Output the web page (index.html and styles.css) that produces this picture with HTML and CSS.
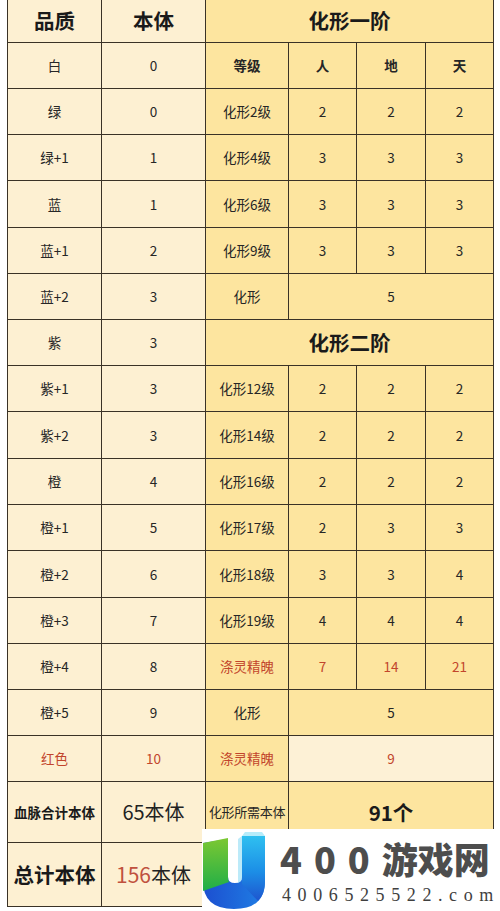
FILE: index.html
```html
<!DOCTYPE html>
<html lang="zh">
<head>
<meta charset="utf-8">
<link rel="stylesheet" href="styles.css">
</head>
<body>
<div class="page">
<table class="grid">
  <colgroup>
    <col class="w1"><col class="w2"><col class="w3"><col class="w4"><col class="w5"><col class="w6">
  </colgroup>
  <tr class="h-head">
    <th class="c big">品质</th><th class="c big">本体</th><th class="y big" colspan="4">化形一阶</th>
  </tr>
  <tr class="r">
    <td class="c">白</td><td class="c">0</td><td class="y b">等级</td><td class="y b">人</td><td class="y b">地</td><td class="y b">天</td>
  </tr>
  <tr class="r">
    <td class="c">绿</td><td class="c">0</td><td class="y">化形2级</td><td class="y">2</td><td class="y">2</td><td class="y">2</td>
  </tr>
  <tr class="r">
    <td class="c">绿+1</td><td class="c">1</td><td class="y">化形4级</td><td class="y">3</td><td class="y">3</td><td class="y">3</td>
  </tr>
  <tr class="r t">
    <td class="c">蓝</td><td class="c">1</td><td class="y">化形6级</td><td class="y">3</td><td class="y">3</td><td class="y">3</td>
  </tr>
  <tr class="r">
    <td class="c">蓝+1</td><td class="c">2</td><td class="y">化形9级</td><td class="y">3</td><td class="y">3</td><td class="y">3</td>
  </tr>
  <tr class="r">
    <td class="c">蓝+2</td><td class="c">3</td><td class="y">化形</td><td class="y" colspan="3">5</td>
  </tr>
  <tr class="r">
    <td class="c">紫</td><td class="c">3</td><td class="y big" colspan="4">化形二阶</td>
  </tr>
  <tr class="r">
    <td class="c">紫+1</td><td class="c">3</td><td class="y">化形12级</td><td class="y">2</td><td class="y">2</td><td class="y">2</td>
  </tr>
  <tr class="r t">
    <td class="c">紫+2</td><td class="c">3</td><td class="y">化形14级</td><td class="y">2</td><td class="y">2</td><td class="y">2</td>
  </tr>
  <tr class="r">
    <td class="c">橙</td><td class="c">4</td><td class="y">化形16级</td><td class="y">2</td><td class="y">2</td><td class="y">2</td>
  </tr>
  <tr class="r">
    <td class="c">橙+1</td><td class="c">5</td><td class="y">化形17级</td><td class="y">2</td><td class="y">3</td><td class="y">3</td>
  </tr>
  <tr class="r t">
    <td class="c">橙+2</td><td class="c">6</td><td class="y">化形18级</td><td class="y">3</td><td class="y">3</td><td class="y">4</td>
  </tr>
  <tr class="r">
    <td class="c">橙+3</td><td class="c">7</td><td class="y">化形19级</td><td class="y">4</td><td class="y">4</td><td class="y">4</td>
  </tr>
  <tr class="r">
    <td class="c">橙+4</td><td class="c">8</td><td class="y red">涤灵精魄</td><td class="y red">7</td><td class="y red">14</td><td class="y red">21</td>
  </tr>
  <tr class="r">
    <td class="c">橙+5</td><td class="c">9</td><td class="y">化形</td><td class="y" colspan="3">5</td>
  </tr>
  <tr class="r">
    <td class="c red">红色</td><td class="c red">10</td><td class="y red">涤灵精魄</td><td class="lt red" colspan="3">9</td>
  </tr>
  <tr class="h-sum">
    <td class="c b sumlabel">血脉合计本体</td><td class="c mid">65本体</td><td class="y need">化形所需本体</td><td class="y big" colspan="3">91个</td>
  </tr>
  <tr class="h-total">
    <td class="c big">总计本体</td><td class="c mid"><span class="redn">156</span>本体</td><td class="y" colspan="4"></td>
  </tr>
</table>

<div class="brand">
  <svg class="logo" viewBox="0 0 62 78" width="62" height="78" aria-hidden="true">
    <defs>
      <linearGradient id="gb" x1="0" y1="0" x2="0" y2="1">
        <stop offset="0" stop-color="#2fc0f0"/>
        <stop offset="0.55" stop-color="#1c8ee6"/>
        <stop offset="1" stop-color="#1e55cf"/>
      </linearGradient>
      <linearGradient id="gu" x1="0" y1="0" x2="1" y2="0">
        <stop offset="0" stop-color="#1c4fd0"/>
        <stop offset="1" stop-color="#1f7ee4"/>
      </linearGradient>
      <linearGradient id="gg" x1="0" y1="0" x2="0" y2="1">
        <stop offset="0" stop-color="#7cc832"/>
        <stop offset="1" stop-color="#1fae48"/>
      </linearGradient>
    </defs>
    <path d="M0 12 L0 50 Q0 78 31 78 Q62 78 62 50 L62 5 L39 5 L39 46 Q39 52 32 52 Q25 52 25 46 L25 8 Z" fill="url(#gu)"/>
    <path d="M39 5 L62 5 L62 50 Q62 63 55 70 L39 53 Z" fill="url(#gb)"/>
    <path d="M0 12 L25 7 L25 46 Q25 49 26 51 L0 60 Z" fill="url(#gg)"/>
    <path d="M39 5 L62 5 L59 1 L42 1 Z" fill="#b6ecfa"/>
    <path d="M39 5 L39 46 Q39 51 35 52 L35 8 Z" fill="#8fdcf5" opacity="0.6"/>
  </svg>
  <div class="brand-text">
    <div class="brand-name"><span class="digits">400</span>游戏网</div>
    <div class="brand-url">4006525522.com</div>
  </div>
</div>
</div>
</body>
</html>
```

FILE: styles.css
```css
html, body {
  margin: 0;
  padding: 0;
  background: #ffffff;
}

.page {
  position: relative;
  width: 500px;
  height: 911px;
  overflow: hidden;
  font-family: "Noto Sans CJK SC", "Noto Sans", sans-serif;
  color: #262626;
}

.grid {
  margin-left: 7px;
  margin-top: -1px;
  width: 486px;
  table-layout: fixed;
  border-collapse: collapse;
  font-size: 13.5px;
}

.w1 { width: 94px; }
.w2 { width: 104px; }
.w3 { width: 83px; }
.w4 { width: 68px; }
.w5 { width: 69px; }
.w6 { width: 68px; }

.grid th,
.grid td {
  border: 1.5px solid #3a3226;
  padding: 0;
  text-align: center;
  vertical-align: middle;
  white-space: nowrap;
  font-weight: 400;
}

.grid tr:first-child th {
  border-top: 0;
}

.h-head { height: 43px; }
.r { height: 46px; }
.r.t { height: 47px; }
.h-sum { height: 61px; }
.h-total { height: 64px; }

.c { background: #fdf0d2; }
.y { background: #fde59f; }
.lt { background: #fdf1d6; }

.b { font-weight: 700 !important; }
.big {
  font-size: 20.5px;
  font-weight: 700 !important;
  color: #1a1a1a;
}
.mid {
  font-size: 20px;
  color: #222;
}
.sumlabel {
  font-size: 13.5px;
  color: #1a1a1a;
}
.need {
  font-size: 13px;
  letter-spacing: -0.3px;
}

.red { color: #c2452c; }
.redn { color: #c0513e; font-size: 21px; }

.brand {
  position: absolute;
  left: 202px;
  top: 829px;
  width: 298px;
  height: 82px;
  background: #ffffff;
  display: flex;
  align-items: flex-start;
}

.logo {
  display: block;
  margin-top: 2px;
  margin-left: 1px;
  flex: none;
}

.brand-text {
  margin-left: 15px;
  display: flex;
  flex-direction: column;
}

.brand-name {
  margin-top: 2px;
  font-family: "Noto Sans CJK SC", sans-serif;
  font-weight: 900;
  font-size: 36px;
  line-height: 54px;
  height: 54px;
  color: #4d4d4d;
  white-space: nowrap;
}

.digits {
  letter-spacing: 12px;
}

.brand-url {
  margin-top: 0;
  margin-left: 2px;
  font-family: "Liberation Serif", serif;
  font-size: 18px;
  line-height: 21px;
  letter-spacing: 6.6px;
  color: #3f3f3f;
  white-space: nowrap;
}
```
